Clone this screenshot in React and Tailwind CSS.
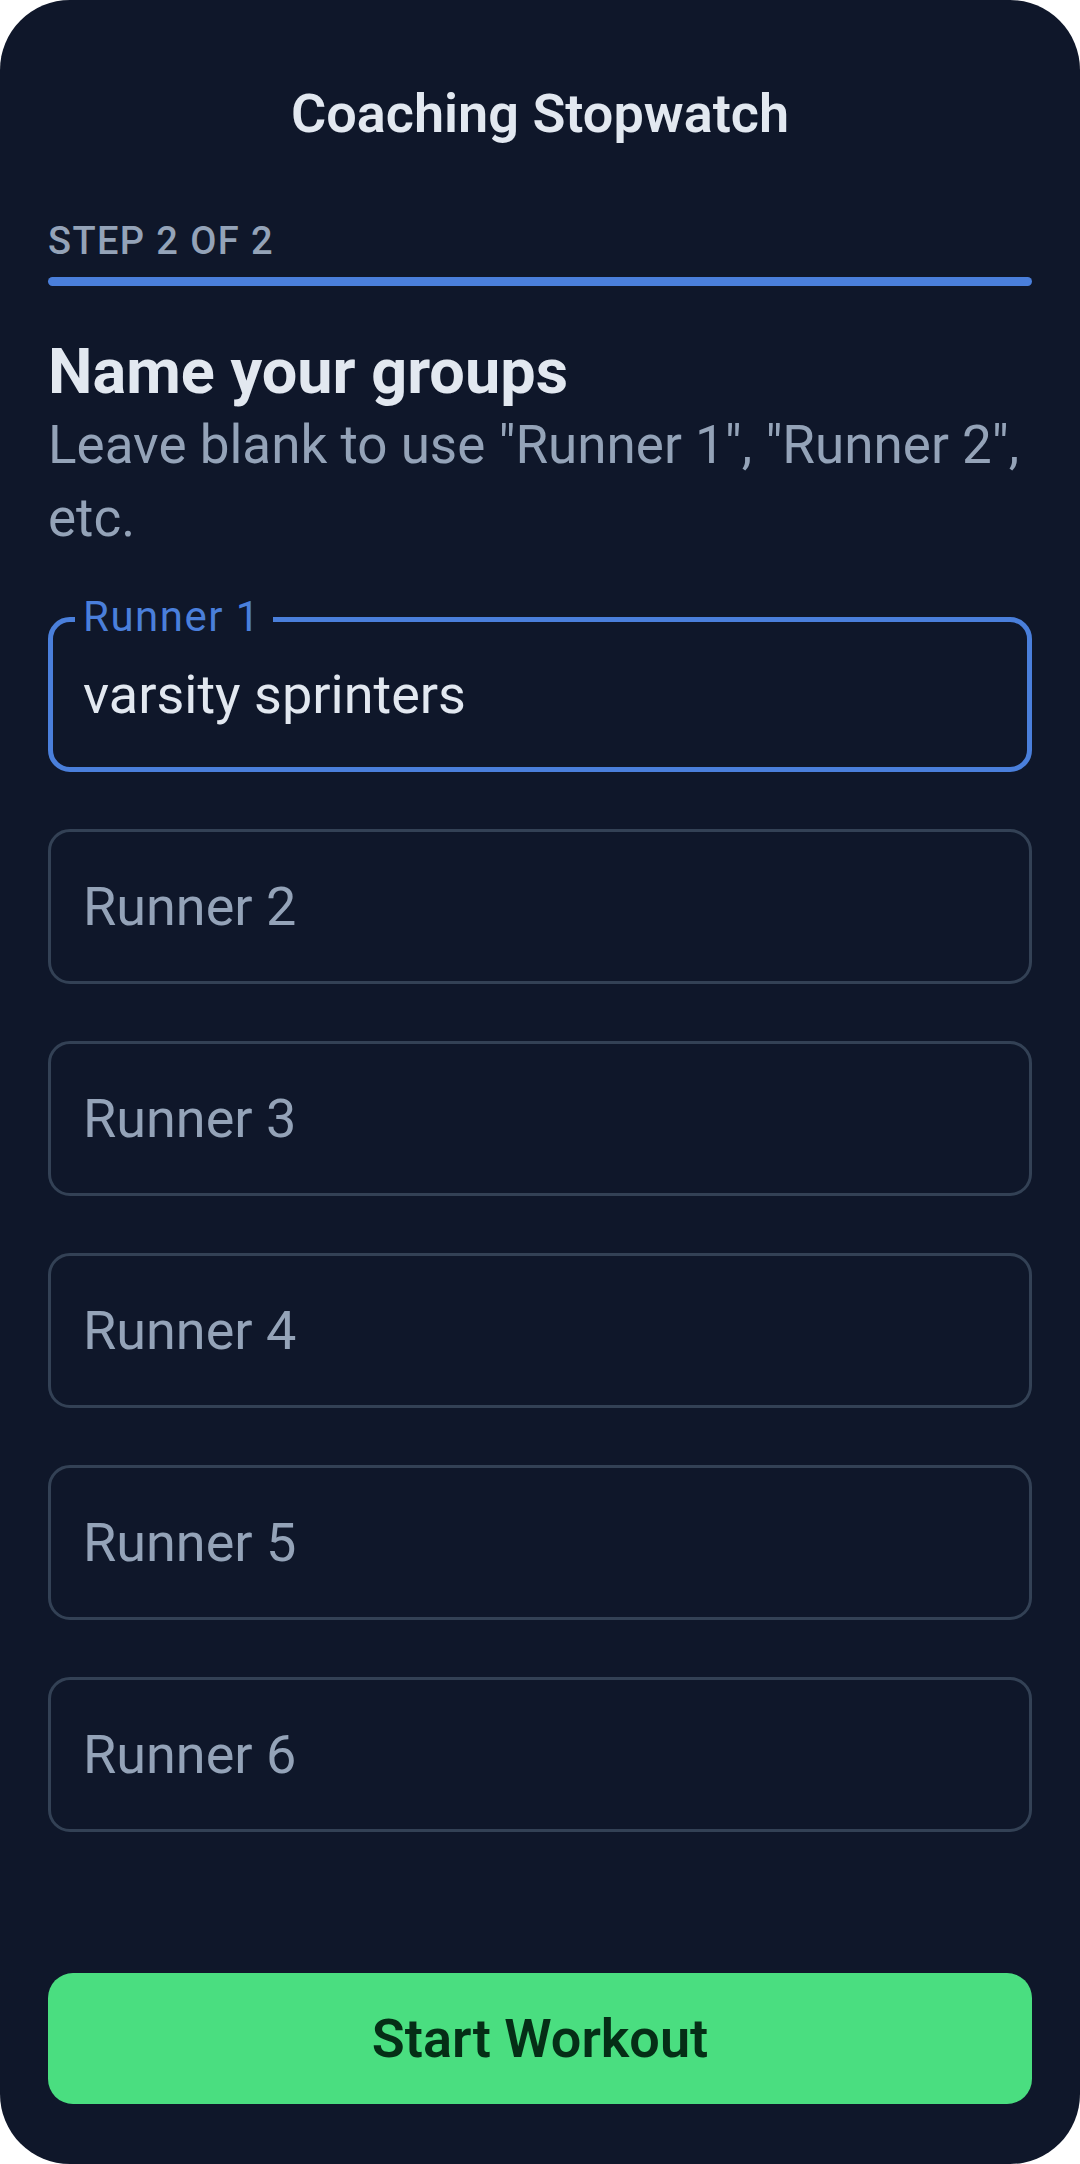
import React from 'react';

const groups = ['varsity sprinters', '', '', '', '', ''];

function GroupField({ index, value }) {
  const focused = index === 0;

  if (focused) {
    return (
      <div className="relative flex h-[155px] items-center rounded-[22px] border-[5px] border-[#4a7fdb] pl-[30px] pr-[30px]">
        {/* floating label sits on the top border */}
        <span className="absolute left-[22px] top-[-30px] bg-[#0f172a] pl-[8px] pr-[12px] text-[42px] leading-[50px] tracking-[1.5px] text-[#4a7fdb]">
          Runner {index + 1}
        </span>
        <input
          readOnly
          value={value}
          className="w-full bg-transparent text-[54px] leading-[64px] text-[#e2e8f0] outline-none"
        />
      </div>
    );
  }

  return (
    <div className="flex h-[155px] items-center rounded-[22px] border-[3px] border-[#334155] pl-[32px] pr-[32px]">
      <input
        readOnly
        value={value}
        placeholder={`Runner ${index + 1}`}
        className="w-full bg-transparent text-[54px] leading-[64px] text-[#e2e8f0] outline-none placeholder:text-[#94a3b8]"
      />
    </div>
  );
}

export default function App() {
  return (
    <div className="min-h-screen bg-white font-[Roboto,sans-serif]">
      <div className="flex h-[2164px] flex-col rounded-[70px] bg-[#0f172a] px-[48px]">
        {/* Header */}
        <h1 className="pt-[82px] text-center text-[54px] font-semibold leading-[64px] text-[#e2e8f0]">
          Coaching Stopwatch
        </h1>

        {/* Step indicator */}
        <div className="mt-[72px] text-[38px] font-medium leading-[46px] tracking-[1.4px] text-[#94a3b8]">
          STEP 2 OF 2
        </div>
        <div className="mt-[13px] h-[9px] w-full rounded-full bg-[#4a7fdb]" />

        {/* Intro copy */}
        <h2 className="mt-[50px] text-[63px] font-bold leading-[72px] text-[#e2e8f0]">
          Name your groups
        </h2>
        <p className="mt-[1px] text-[53px] leading-[73px] text-[#94a3b8]">
          Leave blank to use "Runner 1", "Runner 2", etc.
        </p>

        {/* Group name fields */}
        <div className="mt-[62px] flex flex-col gap-[57px]">
          {groups.map((g, i) => (
            <GroupField key={i} index={i} value={g} />
          ))}
        </div>

        <div className="flex-1" />

        <button className="mb-[60px] flex h-[131px] w-full items-center justify-center rounded-[25px] bg-[#4ade80] text-[54px] font-semibold text-[#052e16]">
          Start Workout
        </button>
      </div>
    </div>
  );
}
